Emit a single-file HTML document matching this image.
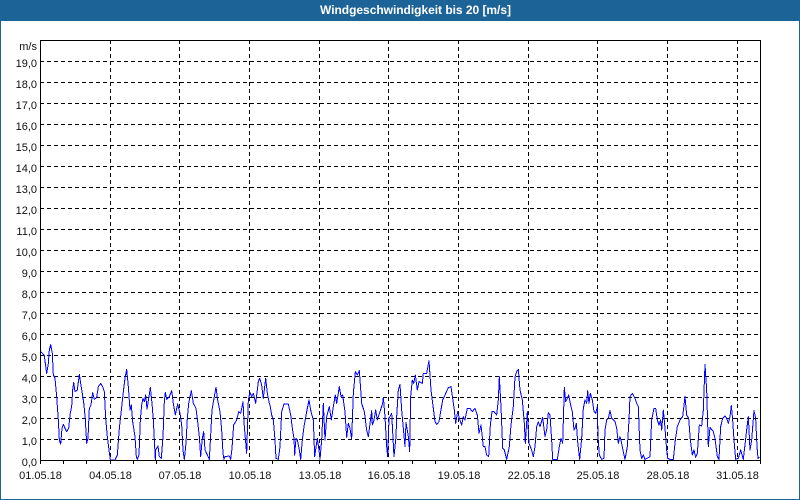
<!DOCTYPE html>
<html><head><meta charset="utf-8"><title>Windgeschwindigkeit</title>
<style>
html,body{margin:0;padding:0;background:#fff}
svg{display:block}
text{font-family:"Liberation Sans",sans-serif;font-size:11px;fill:#111}
</style></head><body>
<svg width="800" height="500" viewBox="0 0 800 500" xmlns="http://www.w3.org/2000/svg">
<rect width="800" height="500" fill="#fff"/>
<rect x="0" y="0" width="800" height="21" fill="#1c6398"/>
<rect x="0" y="0" width="1" height="500" fill="#1c6398"/>
<rect x="799" y="0" width="1" height="500" fill="#1c6398"/>
<rect x="0" y="499" width="800" height="1" fill="#1c6398"/>
<text x="320" y="14" textLength="191" lengthAdjust="spacing" style="font-weight:bold;font-size:12px;fill:#fff">Windgeschwindigkeit bis 20 [m/s]</text>

<g stroke="#000" stroke-width="1" fill="none" shape-rendering="crispEdges" stroke-dasharray="4 3">
<path d="M40 61.5H760M40 82.5H760M40 103.5H760M40 124.5H760M40 145.5H760M40 166.5H760M40 187.5H760M40 208.5H760M40 229.5H760M40 250.5H760M40 271.5H760M40 292.5H760M40 313.5H760M40 334.5H760M40 355.5H760M40 376.5H760M40 397.5H760M40 418.5H760M40 439.5H760"/>
<path d="M110.5 40V460M179.5 40V460M249.5 40V460M319.5 40V460M388.5 40V460M458.5 40V460M528.5 40V460M597.5 40V460M667.5 40V460M737.5 40V460"/>
</g>

<g fill="none" stroke="#0000ff" stroke-width="1" stroke-linejoin="round" shape-rendering="crispEdges">
<polyline vector-effect="non-scaling-stroke" transform="translate(0 340) scale(.33333)" points="122,35 128,40 133,47 136,70 140,100 145,70 148,30 152,14 157,40 160,105 165,115 170,170 175,240 178,300 182,312 186,265 190,253 195,265 200,275 206,265 210,225 215,200 218,150 221,127 225,155 232,150 238,103 242,130 247,160 252,195 256,240 260,310 264,295 268,205 273,195 278,158 283,178 290,172 295,140 302,130 308,140 313,155 317,235 322,290 327,330 331,360 345,360 352,345 358,265 363,220 370,155 375,115 380,88 385,140 390,210 394,195 398,245 405,290 409,350 412,358 417,345 421,240 425,195 429,175 433,185 437,165 441,207 447,170 451,142 456,190 460,240 466,360 467,330 474,318 478,350 484,355 489,290 493,185 496,157 500,178 507,172 515,152 520,190 526,225 533,192 540,220 545,255 549,330 553,358 558,310 562,235 566,190 574,152 580,190 588,205 593,245 598,290 602,350 607,295 611,275 615,330 622,345 628,358 632,285 636,210 642,175 648,142 653,180 660,215 665,270 669,340 672,358 675,350 688,348 692,358 696,325 701,255 710,240 716,215 722,220 729,185 733,260 736,295 740,340 745,180 750,157 755,170 760,160 767,190 775,125 779,115 785,135 790,175 797,115 802,160 808,190 810,195"/>
<polyline vector-effect="non-scaling-stroke" transform="translate(270 340) scale(.33333)" points="0,195 5,225 10,240 15,300 18,355 25,358 30,320 35,215 42,192 55,192 62,225 67,265 72,295 74,345 78,295 82,300 88,330 92,358 97,300 102,260 110,215 117,180 123,215 130,240 134,350 142,295 147,330 150,358 155,300 160,190 165,300 170,230 178,200 184,240 190,200 196,165 200,190 208,140 213,170 218,165 225,215 230,292 235,250 240,265 245,297 250,160 256,95 262,105 268,92 275,190 283,215 290,270 295,290 305,212 307,255 312,240 317,210 322,240 338,190 340,172 345,230 350,320 353,350 357,235 365,220 372,350 378,290 380,230 385,150 390,133 395,210 400,265 405,320 408,248 415,290 419,335 422,170 427,120 431,130 436,105 442,150 447,125 457,130 460,100 470,100 477,62 483,150 490,205 495,245 500,253 507,245 512,215 518,180 525,165 535,143 543,140 548,175 553,210 557,250 563,215 568,235 575,255 580,230 585,240 592,205 600,205 607,215 615,205 622,225 627,280 633,255 640,320 645,320 650,345 656,350 661,255 666,215 672,215 680,225 685,180 688,110 693,200 698,325 703,330 710,358 718,320 723,255 730,200 735,110 740,95 745,88 750,150 757,180 763,250 766,310 772,215 777,310 785,330 790,350 795,320 800,260 805,245"/>
<polyline vector-effect="non-scaling-stroke" transform="translate(530 340) scale(.33333)" points="25,245 30,260 38,232 45,290 50,270 55,218 60,225 65,300 68,358 82,358 88,320 93,295 98,310 103,142 107,185 112,175 116,165 122,195 127,215 132,270 135,265 139,250 143,305 149,358 155,295 160,205 165,180 170,190 173,152 177,190 181,160 187,180 192,215 197,220 202,200 204,290 208,345 215,358 222,355 225,270 230,240 235,235 240,212 245,235 255,245 260,265 265,310 270,290 275,310 282,345 285,358 292,320 297,240 300,170 307,160 315,175 320,190 325,200 330,330 335,355 340,345 345,358 360,350 365,240 372,205 377,205 382,240 387,255 392,240 395,270 400,210 405,265 410,330 413,355 420,358 430,358 436,300 442,260 450,240 458,230 465,170 470,225 476,235 481,300 487,345 492,330 497,352 502,340 508,255 515,258 520,210 525,73 530,150 535,320 540,262 550,275 555,295 562,350 567,358 572,260 578,235 585,228 590,235 595,250 600,230 604,197 608,240 612,300 617,358 625,355 632,330 640,358 650,270 655,230 660,330 665,300 672,212 677,235 681,320 684,355 688,352"/>
</g>

<g stroke="#000" stroke-width="1" fill="none" shape-rendering="crispEdges">
<rect x="40.5" y="40.5" width="720" height="420"/>
<path d="M63.5 461v3M86.5 461v3M110.5 461v3M133.5 461v3M156.5 461v3M179.5 461v3M203.5 461v3M226.5 461v3M249.5 461v3M272.5 461v3M296.5 461v3M319.5 461v3M342.5 461v3M365.5 461v3M388.5 461v3M412.5 461v3M435.5 461v3M458.5 461v3M481.5 461v3M505.5 461v3M528.5 461v3M551.5 461v3M574.5 461v3M597.5 461v3M621.5 461v3M644.5 461v3M667.5 461v3M690.5 461v3M714.5 461v3M737.5 461v3M760.5 461v3M40.5 461v3"/>
</g>

<g text-anchor="end">
<text x="37" y="50">m/s</text>
<text x="37" y="67">19,0</text><text x="37" y="88">18,0</text><text x="37" y="109">17,0</text><text x="37" y="130">16,0</text><text x="37" y="151">15,0</text><text x="37" y="172">14,0</text><text x="37" y="193">13,0</text><text x="37" y="214">12,0</text><text x="37" y="235">11,0</text><text x="37" y="256">10,0</text><text x="37" y="277">9,0</text><text x="37" y="298">8,0</text><text x="37" y="319">7,0</text><text x="37" y="340">6,0</text><text x="37" y="361">5,0</text><text x="37" y="382">4,0</text><text x="37" y="403">3,0</text><text x="37" y="424">2,0</text><text x="37" y="445">1,0</text><text x="37" y="466">0,0</text>
</g>
<g text-anchor="middle">
<text x="40.5" y="479">01.05.18</text><text x="110.5" y="479">04.05.18</text><text x="180" y="479">07.05.18</text><text x="250" y="479">10.05.18</text><text x="320" y="479">13.05.18</text><text x="389" y="479">16.05.18</text><text x="459" y="479">19.05.18</text><text x="529" y="479">22.05.18</text><text x="598" y="479">25.05.18</text><text x="668" y="479">28.05.18</text><text x="737.5" y="479">31.05.18</text>
</g>
</svg>
</body></html>
